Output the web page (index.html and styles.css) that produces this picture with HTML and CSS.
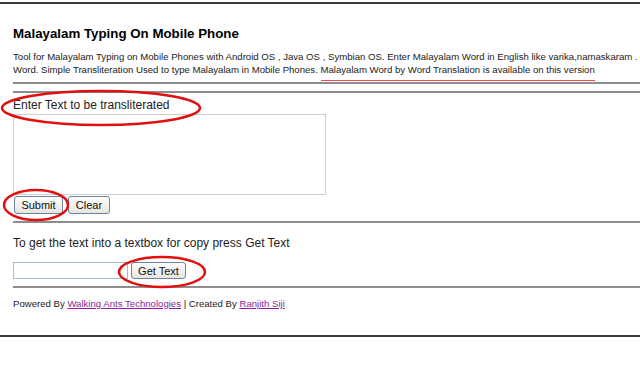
FILE: index.html
```html
<!DOCTYPE html>
<html lang="en">
<head>
    <meta charset="UTF-8">
    <title>Malayalam Typing On Mobile Phone</title>
    <link rel="stylesheet" href="styles.css">
</head>
<body>
    <div class="frame">
        <h1>Malayalam Typing On Mobile Phone</h1>
        <p class="desc">
            Tool for Malayalam Typing on Mobile Phones with Android OS , Java OS , Symbian OS. Enter Malayalam Word in English like varika,namaskaram . Press space after each<br>
            Word. Simple Transliteration Used to type Malayalam in Mobile Phones. <span class="marked">Malayalam Word by Word Translation is available on this version</span>
        </p>
        <div class="rule first"></div>
        <div class="rule"></div>

        <form class="box" onsubmit="return false">
            <label for="src">Enter Text to be transliterated</label>
            <textarea id="src"></textarea>
            <div class="buttons">
                <button type="submit" class="submit">Submit</button>
                <button type="reset" class="clear">Clear</button>
            </div>
        </form>
        <div class="rule"></div>

        <div class="box copy">
            <p class="hint">To get the text into a textbox for copy press Get Text</p>
            <div class="buttons">
                <input type="text" class="out">
                <button type="button" class="get">Get Text</button>
            </div>
        </div>
        <div class="rule"></div>

        <p class="footer">Powered By <a href="#">Walking Ants Technologies</a> | Created By <a href="#">Ranjith Siji</a></p>
    </div>

    <!-- red hand-drawn marks over the screenshot -->
    <svg class="marks" width="640" height="374" viewBox="0 0 640 374">
        <ellipse cx="101" cy="108" rx="99" ry="17" />
        <ellipse cx="36" cy="205" rx="32" ry="15" />
        <ellipse cx="162" cy="272" rx="43" ry="15" />
    </svg>
</body>
</html>
```

FILE: styles.css
```css
body {
    margin: 0;
    font-family: 'Liberation Sans', Arial, sans-serif;
    color: #111;
    background: #fff;
    overflow: hidden;
    width: 640px;
    height: 374px;
    position: relative;
}
.frame {
    margin-top: 2px;
    width: 1100px;
    padding: 0 0 25px 13px;
    border-top: 2px solid #3a3a3a;
    border-bottom: 2px solid #3a3a3a;
}
h1 {
    font-size: 13.3px;
    line-height: 16px;
    margin: 22px 0 0;
    color: #000;
}
.desc {
    font-size: 9.6px;
    line-height: 13px;
    margin: 8px 0 0;
    color: #222;
}
.marked {
    border-bottom: 1px solid #ee4a4a;
    padding-bottom: 5px;
}
.rule {
    height: 2px;
    background: #8e8e8e;
    width: 1000px;
}
.rule.first { margin: 6px 0 7px; }
.box { margin: 4px 0 7px; }
label, .hint {
    display: block;
    font-size: 12px;
    line-height: 16px;
    color: #222;
}
textarea {
    display: block;
    box-sizing: border-box;
    width: 313px;
    height: 81px;
    margin: 1px 0 1px;
    border: 1px solid #cfcfcf;
    resize: none;
}
.buttons {
    display: flex;
    align-items: center;
    gap: 5px;
    padding-left: 1px;
}
button {
    box-sizing: border-box;
    height: 18px;
    padding: 0;
    font-family: 'Liberation Sans', Arial, sans-serif;
    font-size: 11px;
    color: #111;
    background: linear-gradient(#fdfdfd, #e6e6e0);
    border: 1px solid #6d83a0;
    border-radius: 3px;
}
.submit { width: 49px; }
.clear { width: 42px; }
.box.copy { margin-top: 0; }
.hint { margin: 12px 0 11px; }
.copy .buttons { padding-left: 0; gap: 3px; }
.out {
    box-sizing: border-box;
    width: 115px;
    height: 17px;
    margin: 0;
    border: 1px solid #a9bdd2;
}
.get { width: 55px; height: 17px; }
.footer {
    font-size: 9.6px;
    line-height: 13px;
    margin: 9px 0 0;
    color: #222;
}
.footer a { color: #8b1e9b; }
.marks {
    position: absolute;
    left: 0;
    top: 0;
    pointer-events: none;
}
.marks ellipse {
    fill: none;
    stroke: #e01010;
    stroke-width: 2.5;
}
```
